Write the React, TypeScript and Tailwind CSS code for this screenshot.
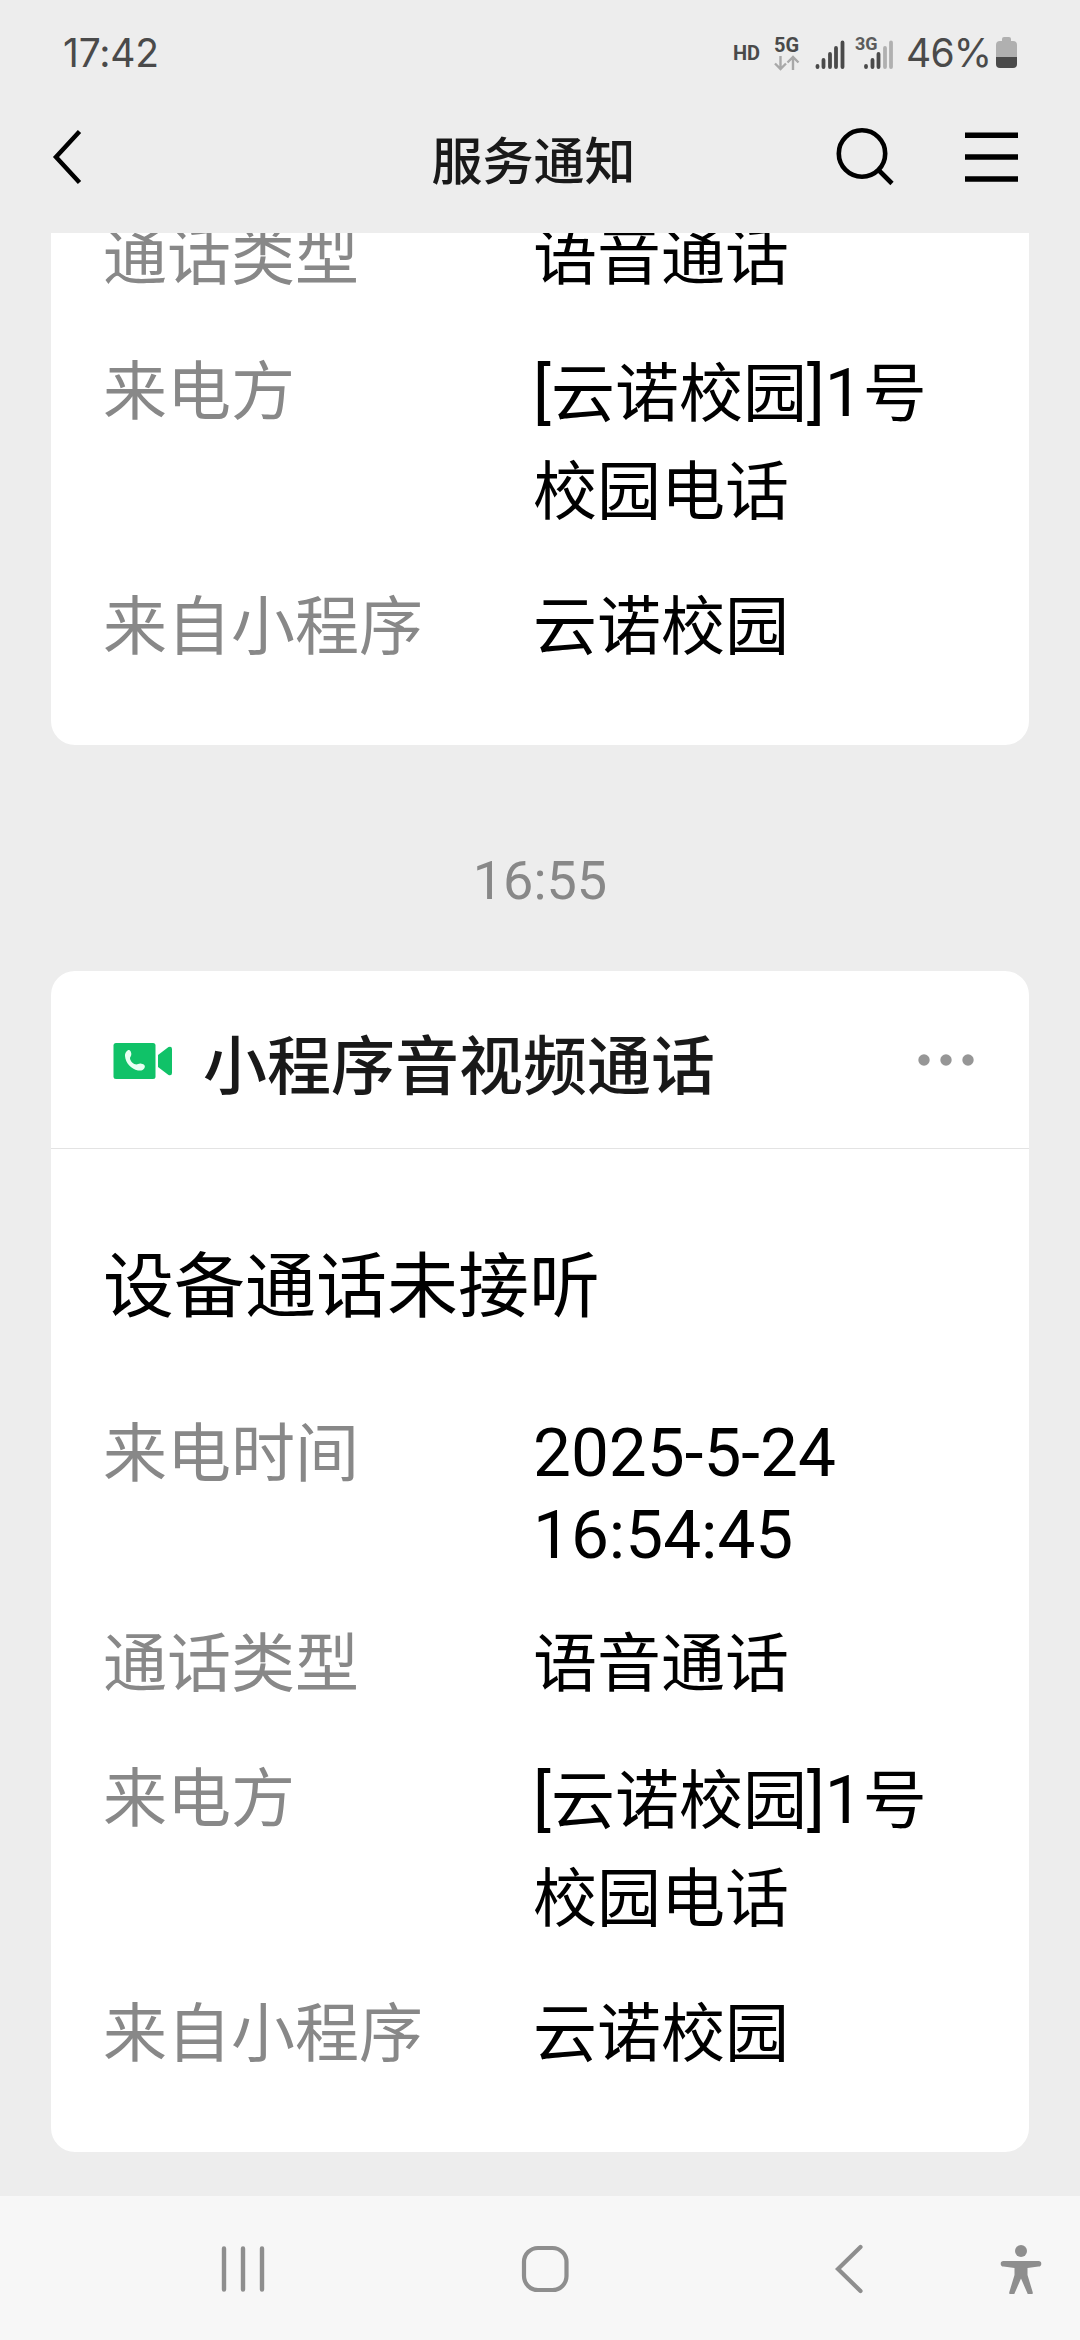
import React from 'react';

interface Field {
  label: string;
  lines: string[];
}

const CALL_FIELDS: Field[] = [
  { label: '通话类型', lines: ['语音通话'] },
  { label: '来电方', lines: ['[云诺校园]1号', '校园电话'] },
  { label: '来自小程序', lines: ['云诺校园'] },
];

function StatusBar() {
  return (
    <div className="h-[104px] pt-[2px] pl-[63px] pr-[63px] flex items-center justify-between text-[#4a4a4a]">
      <span className="font-[Inter,sans-serif] text-[39px] leading-[46px] tracking-[-0.2px]">17:42</span>
      <div className="flex items-center h-[48px]">
        <span className="text-[20px] leading-6 font-bold w-[41px]">HD</span>
        <svg width="29" height="48" viewBox="0 0 29 48" className="mr-[12px]">
          <text x="0" y="22.500" fontSize="20" fontWeight="700" fill="#4a4a4a">5G</text>
          <path d="M6.500 27v13M1 34.500l5.500 5.500 5.500-5.500M19 41V28M13.500 33.500L19 28l5.500 5.500" fill="none" stroke="#a8a8a8" strokeWidth="2.400" />
        </svg>
        <svg width="30" height="48" viewBox="0 0 30 48" className="mr-[10px]">
          <path d="M2.500 38v-1M8.500 38v-7M15 38V25M21 38V19M27.500 38V13.500" stroke="#4a4a4a" strokeWidth="3.800" strokeLinecap="round" />
        </svg>
        <svg width="40" height="48" viewBox="0 0 40 48" className="mr-[11px]">
          <path d="M11 38v-1M17.500 38v-7M23.500 38V25" stroke="#4a4a4a" strokeWidth="3.800" strokeLinecap="round" />
          <path d="M30 38V19M36 38V13.500" stroke="#b0b0b0" strokeWidth="3.800" strokeLinecap="round" />
          <text x="0" y="21" fontSize="18" fontWeight="700" fill="#5c5c5c">3G</text>
        </svg>
        <span className="font-[Inter,sans-serif] text-[39px] leading-[46px] w-[90px] tracking-[-0.8px] whitespace-nowrap">46%</span>
        <svg width="21" height="32" viewBox="0 0 21 32">
          <path d="M6 2q0-2 2-2h5q2 0 2 2v2h2q4 0 4 4v12H0V8q0-4 4-4h2z" fill="#b0b0b0" />
          <path d="M0 20h21v7q0 4-4 4H4q-4 0-4-4z" fill="#4a4a4a" />
        </svg>
      </div>
    </div>
  );
}

function Header() {
  return (
    <div className="h-[129px] grid grid-cols-[1fr_auto_1fr] items-start pl-[52px] pr-[62px] text-[#191919]">
      <svg width="30" height="56" viewBox="0 0 30 56" className="mt-[25px]">
        <path d="M27.500 2.500L4 28l23.500 25.500" fill="none" stroke="#000" strokeWidth="4.500" />
      </svg>
      <h1 className="text-[51px] leading-[60px] font-medium mt-[29px] mr-[3px]">服务通知</h1>
      <div className="flex justify-end mt-[22px]">
        <svg width="62" height="62" viewBox="0 0 62 62" className="mr-[69px]">
          <circle cx="28" cy="27.500" r="23.200" fill="none" stroke="#000" strokeWidth="4.600" />
          <path d="M44.500 44L58 57.500" stroke="#000" strokeWidth="4.600" />
        </svg>
        <svg width="53" height="62" viewBox="0 0 53 62">
          <path d="M0 9.200h53M0 31h53M0 53h53" stroke="#000" strokeWidth="5.400" />
        </svg>
      </div>
    </div>
  );
}

// digits and latin run slightly larger than the CJK glyphs
function Value({ text }: { text: string }) {
  return (
    <span className="block h-[100px] leading-[100px] whitespace-nowrap">
      {text.split(/([[\]\d]+)/).map((part, i) => (
        <span key={i} className={/[[\]\d]/.test(part) ? 'text-[67.5px]' : ''}>{part}</span>
      ))}
    </span>
  );
}

function FieldList() {
  return (
    <div className="flex flex-col gap-[35px]">
      {CALL_FIELDS.map((field) => (
        <div key={field.label} className="flex text-[64px]">
          <span className="w-[430px] shrink-0 leading-[100px] text-[#888]">{field.label}</span>
          <div className="text-black">
            {field.lines.map((line) => <Value key={line} text={line} />)}
          </div>
        </div>
      ))}
    </div>
  );
}

function CallIcon() {
  return (
    <svg width="60" height="38" viewBox="0 0 60 38" className="mt-[3px]">
      <rect x="0.500" y="1" width="42" height="36" rx="2.500" fill="#10c268" />
      <path d="M45 13L55.500 5q3.500-1 3.500 2v24q0 3-3.500 2L45 25z" fill="#10c268" />
      <path d="M14.500 8.500c2-1.300 3.300 0 3.800 3 .4 2.500-1.300 3.300-1.300 4.500 0 3 3.500 6.500 6.500 6.500 1.500 0 2-1.300 5-.8 3 .6 4 2 3 4.300-1 2-3.500 3-6.500 2.400C18 27 12.500 21 12 14c-.2-2.500 1-4.500 2.500-5.500z" fill="#e9fff3" />
    </svg>
  );
}

function NavBar() {
  return (
    <div className="h-[144px] bg-[#f7f7f7] flex items-center pl-[220px] pr-[37px]">
      <svg width="46" height="50" viewBox="0 0 46 50">
        <path d="M4 5.500v41M23 5.500v41M42 5.500v41" stroke="#8e8e8e" strokeWidth="4.400" strokeLinecap="round" />
      </svg>
      <svg width="50" height="50" viewBox="0 0 50 50" className="ml-[254px]">
        <rect x="4" y="5" width="42.500" height="42" rx="14" fill="none" stroke="#8e8e8e" strokeWidth="4.200" />
      </svg>
      <svg width="30" height="52" viewBox="0 0 30 52" className="ml-[263px]">
        <path d="M27.500 5L5 27l22.500 22" fill="none" stroke="#8e8e8e" strokeWidth="4.200" strokeLinecap="round" />
      </svg>
      <svg width="44" height="52" viewBox="0 0 44 52" className="ml-auto">
        <circle cx="22" cy="9" r="6" fill="#8e8e8e" />
        <path d="M4.500 19h35a2.800 2.800 0 0 1 0 5.600L28.500 26v7l5 16.500a2.500 2.500 0 0 1-5 2L22 36.500l-6.500 15a2.500 2.500 0 0 1-5-2l5-16.500v-7l-11-1.400a2.800 2.800 0 0 1 0-5.600z" fill="#8e8e8e" />
      </svg>
    </div>
  );
}

export default function App() {
  return (
    <div className="w-[1080px] h-[2340px] bg-[#ededed] flex flex-col overflow-hidden font-[Roboto,'Noto_Sans_CJK_SC',sans-serif]">
      <StatusBar />
      <Header />

      <main className="h-[1963px] px-[51px] flex flex-col overflow-hidden">
        {/* Previous message, scrolled partly under the header */}
        <section className="h-[512px] shrink-0 bg-white rounded-b-[24px] px-[52px] flex flex-col justify-end overflow-hidden pb-[67px]">
          <FieldList />
        </section>

        <div className="h-[226px] shrink-0 pt-[104px] text-center text-[54px] leading-[64px] text-[#888]">16:55</div>

        <section className="h-[1181px] shrink-0 bg-white rounded-[24px] overflow-hidden">
          <div className="h-[178px] border-b border-[#e3e3e3] pl-[62px] pr-[54px] flex items-center text-[#191919]">
            <CallIcon />
            <h2 className="ml-[30px] text-[64px] leading-[90px] mt-[16px] font-medium">小程序音视频通话</h2>
            <svg width="58" height="14" viewBox="0 0 58 14" className="ml-auto">
              <circle cx="7" cy="7" r="5.700" fill="#969696" />
              <circle cx="29" cy="7" r="5.700" fill="#969696" />
              <circle cx="51" cy="7" r="5.700" fill="#969696" />
            </svg>
          </div>
          <div className="px-[52px] pt-[86px]">
            <h3 className="text-[71px] leading-[104px] text-black">设备通话未接听</h3>
            <div className="flex text-[64px] mt-[66px] h-[210px]">
              <span className="w-[430px] shrink-0 leading-[100px] text-[#888]">来电时间</span>
              <div className="text-[67.5px] leading-[81.5px] pt-[7px] text-black">
                <p>2025-5-24</p>
                <p>16:54:45</p>
              </div>
            </div>
            <FieldList />
          </div>
        </section>
      </main>

      <NavBar />
    </div>
  );
}
